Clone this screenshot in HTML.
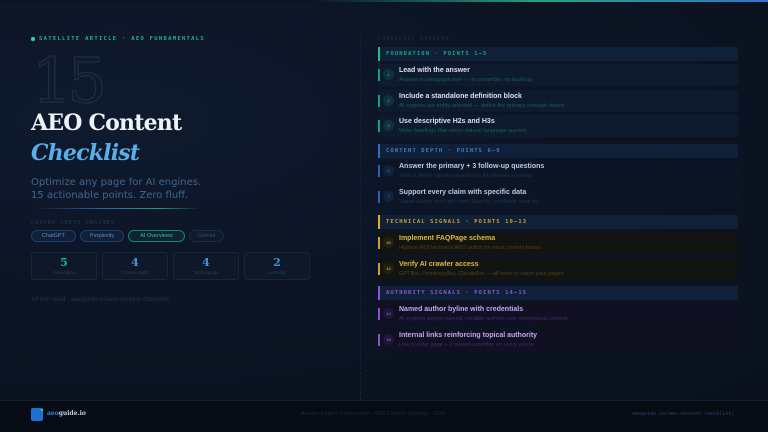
<!DOCTYPE html>
<html><head><meta charset="utf-8"><style>
*{margin:0;padding:0;box-sizing:border-box}
body{width:768px;height:432px;overflow:hidden;background:#0b1220;font-family:"Liberation Sans","DejaVu Sans",sans-serif;position:relative}
.bg{position:absolute;left:0;top:0;width:768px;height:400px;background:radial-gradient(ellipse at 15% 30%,#0f1a2e 0%,#0c1424 50%,#0a111d 100%)}
.a{position:absolute;white-space:nowrap}
.mono{font-family:"DejaVu Sans Mono","Liberation Mono",monospace}
.pill{position:absolute;top:230px;height:12px;border:1px solid #1f3e66;border-radius:7px;background:#0f2038;color:#5b8fc8;font-size:5.5px;text-align:center;line-height:10px}
.stat{position:absolute;top:252px;width:66px;height:28px;border:1px solid #16263d;border-radius:3px;background:#0e1829;text-align:center}
.stat b{display:block;font-family:"DejaVu Serif","Liberation Serif",serif;font-size:11px;color:#4a90d0;margin-top:3px}
.stat span{display:block;font-size:4.5px;color:#24405f;margin-top:1px}
.hd{position:absolute;left:378px;width:360px;height:14px;background:#0f2038;border-left:2px solid;font-family:"DejaVu Sans Mono",monospace;font-size:5.5px;font-weight:bold;letter-spacing:1.1px;line-height:14px;padding-left:6px}
.it{position:absolute;left:378px;width:360px;height:22px;border-radius:3px}
.it:before{content:"";position:absolute;left:0;top:5px;width:1.5px;height:12px;background:var(--c)}
.it .n{position:absolute;left:5px;top:5px;width:11px;height:11px;border-radius:50%;background:var(--nb);color:var(--c);font-size:4px;font-weight:bold;text-align:center;line-height:11px}
.it .t{position:absolute;left:21px;top:3px;font-size:7px;font-weight:bold;color:var(--tc);white-space:nowrap}
.it .d{position:absolute;left:21px;top:12.5px;font-size:5.6px;color:var(--dc);white-space:nowrap}
.g{--c:#14a37a;--nb:#113040;--tc:#d6e2ee;--dc:#17604d;background:#0e1b2e}
.b{--c:#2a64b0;--nb:#12233c;--tc:#b8cce2;--dc:#1b3656;background:#0c1526}
.y{--c:#c9a227;--nb:#221f14;--tc:#d8b84a;--dc:#4c4020;background:#12150f}
.p{--c:#8a4fd6;--nb:#1e1736;--tc:#c0a8ee;--dc:#3f2c6e;background:#110f22}
</style></head><body>
<div class="bg"></div>
<div class="a" style="left:0;top:0;width:768px;height:1.5px;background:linear-gradient(90deg,#0b1220 0%,#0b1220 40%,#1fa37c 70%,#2a78d0 100%)"></div>
<div class="a" style="left:31px;top:37px;width:3.5px;height:3.5px;border-radius:50%;background:#2bd69a"></div>
<div class="a mono" style="left:39px;top:36px;font-size:5.5px;font-weight:bold;letter-spacing:1.3px;color:#23b586">SATELLITE ARTICLE · AEO FUNDAMENTALS</div>
<div class="a" style="left:32px;top:48px;font-family:'DejaVu Serif','Liberation Serif',serif;font-size:62px;line-height:66px;color:#0e192b;-webkit-text-stroke:1.5px #1a2c45;letter-spacing:-4px">15</div>
<div class="a" style="left:31px;top:110px;font-family:'DejaVu Serif','Liberation Serif',serif;font-weight:bold;font-size:22px;color:#eef2f6;letter-spacing:-0.8px">AEO Content</div>
<div class="a" style="left:31px;top:140px;font-family:'DejaVu Serif','Liberation Serif',serif;font-weight:bold;font-style:italic;font-size:22px;color:#5aaee8;letter-spacing:-0.8px">Checklist</div>
<div class="a" style="left:31px;top:176px;font-size:10px;line-height:13px;color:#3f6790;font-family:'DejaVu Sans',sans-serif">Optimize any page for AI engines.<br>15 actionable points. Zero fluff.</div>
<div class="a" style="left:31px;top:208px;width:170px;height:1px;background:linear-gradient(90deg,#0c1526,#2a5fa0 40%,#1aa37a 75%,#0c1526)"></div>
<div class="a mono" style="left:31px;top:220px;font-size:5px;letter-spacing:1.2px;color:#24384f">COVERS THESE ENGINES</div>
<div class="pill" style="left:31px;width:45px">ChatGPT</div>
<div class="pill" style="left:80px;width:44px">Perplexity</div>
<div class="pill" style="left:128px;width:57px;border-color:#17866a;color:#2bc49a;background:#0e2430">AI Overviews</div>
<div class="pill" style="left:189px;width:35px;border-color:#1b2c44;color:#34506f;background:#0f1a2c">Gemini</div>
<div class="stat" style="left:31px"><b style="color:#1fb889">5</b><span>Foundation</span></div>
<div class="stat" style="left:102px"><b>4</b><span>Content depth</span></div>
<div class="stat" style="left:173px"><b>4</b><span>Tech signals</span></div>
<div class="stat" style="left:244px"><b>2</b><span>Authority</span></div>
<div class="a" style="left:31px;top:296px;font-size:6.5px;color:#1f3450">14 min read · aeoguide.io/aeo-content-checklist/</div>
<div class="a" style="left:360px;top:30px;height:370px;border-left:1px dashed #17223a"></div>
<div class="a mono" style="left:378px;top:36px;font-size:5px;letter-spacing:1.2px;color:#1e3048">CHECKLIST PREVIEW</div>

<div class="hd" style="top:47px;border-color:#17c08c;color:#17a97d">FOUNDATION · POINTS 1–5</div>
<div class="it g" style="top:64px"><div class="n">1</div><div class="t">Lead with the answer</div><div class="d">Answer in paragraph one — no preamble, no build-up</div></div>
<div class="it g" style="top:90px"><div class="n">2</div><div class="t">Include a standalone definition block</div><div class="d">AI engines are entity-oriented — define the primary concept clearly</div></div>
<div class="it g" style="top:115px"><div class="n">3</div><div class="t">Use descriptive H2s and H3s</div><div class="d">Write headings that mirror natural language queries</div></div>

<div class="hd" style="top:144px;border-color:#2a70c8;color:#3e7ec4">CONTENT DEPTH · POINTS 6–9</div>
<div class="it b" style="top:160px"><div class="n">6</div><div class="t">Answer the primary + 3 follow-up questions</div><div class="d">Topical depth signals expertise to AI retrieval systems</div></div>
<div class="it b" style="top:186px"><div class="n">7</div><div class="t">Support every claim with specific data</div><div class="d">Vague claims don't get cited. Specific, verifiable ones do.</div></div>

<div class="hd" style="top:215px;border-color:#d8b02a;color:#c9a42a">TECHNICAL SIGNALS · POINTS 10–13</div>
<div class="it y" style="top:232px"><div class="n">10</div><div class="t">Implement FAQPage schema</div><div class="d">Highest ROI technical AEO action for most content teams</div></div>
<div class="it y" style="top:258px"><div class="n">12</div><div class="t">Verify AI crawler access</div><div class="d">GPTBot, PerplexityBot, ClaudeBot — all need to reach your pages</div></div>

<div class="hd" style="top:286px;border-color:#9050e0;color:#8a58d8">AUTHORITY SIGNALS · POINTS 14–15</div>
<div class="it p" style="top:303px"><div class="n">14</div><div class="t">Named author byline with credentials</div><div class="d">AI engines weight named, credible authors over anonymous content</div></div>
<div class="it p" style="top:329px"><div class="n">15</div><div class="t">Internal links reinforcing topical authority</div><div class="d">Link to pillar page + 2 related satellites on every article</div></div>

<div class="a" style="left:0;top:400px;width:768px;height:32px;background:#070b14;border-top:1px solid #151f32"></div>
<div class="a" style="left:31px;top:408px;width:12px;height:13px;border-radius:2px;background:#1e6fd0"></div>
<div class="a" style="left:41px;top:409px;width:2px;height:2px;background:#2bd69a"></div>
<div class="a" style="left:47px;top:410px;font-family:'DejaVu Serif',serif;font-size:6px;font-weight:bold;color:#c8d4e2"><span style="color:#3a86d8">aeo</span>guide.io</div>
<div class="a" style="left:301px;top:411px;font-size:5.5px;color:#172a45">Answer Engine Optimization · B2B Content Strategy · 2026</div>
<div class="a mono" style="left:632px;top:411px;font-size:5px;color:#27456e">aeoguide.io/aeo-content-checklist/</div>
</body></html>
